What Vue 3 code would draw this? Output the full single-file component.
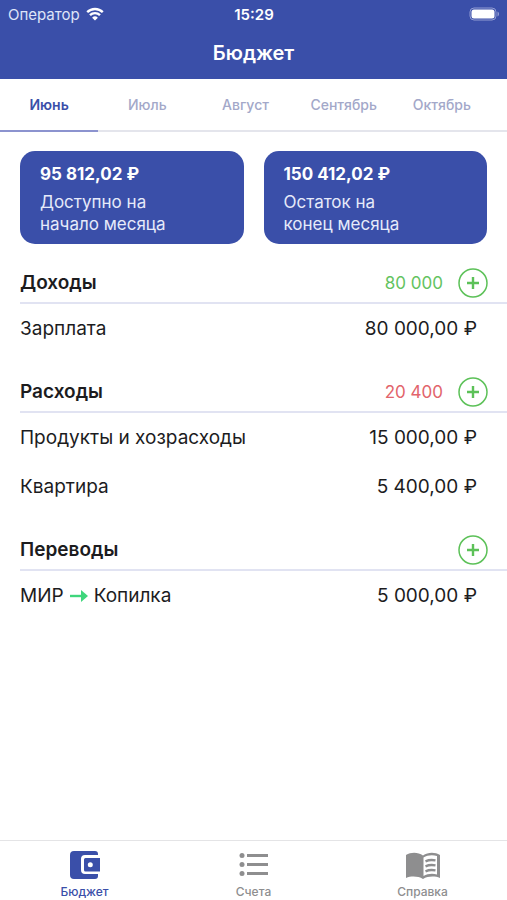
<template>
  <div class="app">
    <header class="header">
      <div class="status">
        <div class="carrier">
          <span>Оператор</span>
          <svg class="wifi" viewBox="0 0 18 14" aria-hidden="true">
            <path d="M1.2 5.1a11.2 11.2 0 0 1 15.6 0" />
            <path d="M4 8.1a7.2 7.2 0 0 1 10 0" />
            <path class="dot" d="M9 13.6 6.1 10.7a4.1 4.1 0 0 1 5.8 0z" />
          </svg>
        </div>
        <span class="time">15:29</span>
        <svg class="battery" viewBox="0 0 31 14" aria-hidden="true">
          <rect class="shell" x="1" y="1" width="26" height="12" rx="4" />
          <rect x="2.5" y="2.5" width="23" height="9" rx="2.5" />
          <path class="tip" d="M28.5 4.5c2 .8 2 4.2 0 5z" />
        </svg>
      </div>
      <h1>Бюджет</h1>
    </header>

    <nav class="months">
      <button
        v-for="month in months"
        :key="month"
        class="month"
        :class="{ active: month === currentMonth }"
        @click="currentMonth = month"
      >
        {{ month }}
      </button>
    </nav>

    <main class="content">
      <div class="cards">
        <div v-for="card in cards" :key="card.label" class="card">
          <strong>{{ card.amount }}</strong>
          <p>{{ card.label }}</p>
        </div>
      </div>

      <section v-for="group in groups" :key="group.title" class="group">
        <div class="group-head">
          <h2>{{ group.title }}</h2>
          <span class="total" :class="group.type">{{ group.total }}</span>
          <button class="add" :aria-label="'Добавить: ' + group.title">
            <svg viewBox="0 0 30 30" aria-hidden="true">
              <circle cx="15" cy="15" r="14" />
              <path d="M15 9v12M9 15h12" />
            </svg>
          </button>
        </div>
        <ul>
          <li v-for="item in group.items" :key="item.name">
            <span class="name">
              {{ item.name }}
              <template v-if="item.to">
                <svg class="arrow" viewBox="0 0 18 12" aria-hidden="true">
                  <path class="shaft" d="M0 6h13" />
                  <path d="M11 0l7 6-7 6z" />
                </svg>
                {{ item.to }}
              </template>
            </span>
            <span>{{ item.amount }}</span>
          </li>
        </ul>
      </section>
    </main>

    <nav class="bottom-nav">
      <a href="#budget" class="nav-item active">
        <svg viewBox="0 0 32 30" aria-hidden="true">
          <path
            d="M5 1h21a3 3 0 0 1 3 3v1H16a4 4 0 0 0-4 4v11a4 4 0 0 0 4 4h13v2a3 3 0 0 1-3 3H5a4 4 0 0 1-4-4V5a4 4 0 0 1 4-4z"
          />
          <path
            fill-rule="evenodd"
            d="M16.5 8H31v13.500H16.500A1.500 1.500 0 0 1 15 20V9.500A1.500 1.500 0 0 1 16.500 8zm4.800 4.300a2.500 2.500 0 1 0 0 5 2.500 2.500 0 0 0 0-5z"
          />
        </svg>
        <span>Бюджет</span>
      </a>
      <a href="#accounts" class="nav-item">
        <svg viewBox="0 0 32 30" aria-hidden="true">
          <circle cx="4" cy="5.5" r="2.5" />
          <circle cx="4" cy="14.5" r="2.5" />
          <circle cx="4" cy="23.5" r="2.5" />
          <path d="M9 4h21v3H9zM9 13h21v3H9zM9 22h21v3H9z" />
        </svg>
        <span>Счета</span>
      </a>
      <a href="#help" class="nav-item">
        <svg class="book" viewBox="0 0 36 30" aria-hidden="true">
          <path d="M1 5C6 2 13 2 18 5.500 23 2 30 2 35 5v23c-5-2-12-2-17 1-5-3-12-3-17-1z" />
          <path class="page" d="M18.500 7.500c4-2.500 9-3 13.500-1.500v18.500c-4.500-1.200-9.500-.8-13.500 1.500z" />
          <path
            class="lines"
            d="M20.500 11.300c3-1.300 6-1.600 10-.9M20.500 16.300c3-1.300 6-1.600 10-.9M20.500 21.300c3-1.300 6-1.600 10-.9"
          />
        </svg>
        <span>Справка</span>
      </a>
    </nav>
  </div>
</template>

<script setup>
import { ref } from 'vue';

const months = ['Июнь', 'Июль', 'Август', 'Сентябрь', 'Октябрь'];
const currentMonth = ref('Июнь');

const cards = [
  { amount: '95 812,02 ₽', label: 'Доступно на начало месяца' },
  { amount: '150 412,02 ₽', label: 'Остаток на конец месяца' },
];

const groups = [
  {
    title: 'Доходы',
    total: '80 000',
    type: 'income',
    items: [{ name: 'Зарплата', amount: '80 000,00 ₽' }],
  },
  {
    title: 'Расходы',
    total: '20 400',
    type: 'expense',
    items: [
      { name: 'Продукты и хозрасходы', amount: '15 000,00 ₽' },
      { name: 'Квартира', amount: '5 400,00 ₽' },
    ],
  },
  {
    title: 'Переводы',
    total: '',
    type: 'transfer',
    items: [{ name: 'МИР', to: 'Копилка', amount: '5 000,00 ₽' }],
  },
];
</script>

<style>
body {
  margin: 0;
  background: #fff;
}
</style>

<style scoped>
* {
  box-sizing: border-box;
}

.app {
  display: flex;
  flex-direction: column;
  min-height: 100vh;
  font-family: Inter, 'Liberation Sans', sans-serif;
  color: #1c1c1e;
}

h1,
h2,
p,
ul {
  margin: 0;
  padding: 0;
}

button {
  padding: 0;
  border: none;
  background: none;
  font-family: inherit;
  cursor: pointer;
}

/* Header */
.header {
  padding-bottom: 6px;
  background: #3a4fa9;
  color: #fff;
}

.status {
  display: grid;
  grid-template-columns: 1fr auto 1fr;
  align-items: center;
  height: 28px;
  padding: 0 7px 0 8px;
  font-size: 15px;
}

.carrier {
  display: flex;
  align-items: center;
  gap: 6px;
  color: #dfe4f8;
}

.wifi {
  width: 18px;
  height: 14px;
  fill: none;
  stroke: #fff;
  stroke-width: 2.4;
}

.wifi .dot {
  fill: #fff;
  stroke: none;
}

.time {
  font-weight: 600;
}

.battery {
  justify-self: end;
  width: 31px;
  height: 14px;
  fill: #fff;
}

.battery .shell {
  fill: none;
  stroke: #929dd3;
}

.battery .tip {
  fill: #929dd3;
}

h1 {
  padding-top: 5px;
  font-size: 20px;
  font-weight: 600;
  line-height: 40px;
  text-align: center;
}

/* Months */
.months {
  display: flex;
  height: 53px;
  padding-right: 16px;
  box-shadow: inset 0 -2px #e4e5ec;
}

.month {
  flex: 1 1 0;
  min-width: 0;
  border-bottom: 2px solid transparent;
  font-size: 14px;
  font-weight: 500;
  color: #a3a8c9;
}

.month.active {
  border-bottom-color: #8c93cf;
  font-weight: 600;
  color: #3a4fa9;
}

/* Balance cards */
.content {
  flex: 1;
  padding-top: 19px;
}

.cards {
  display: grid;
  grid-template-columns: 1fr 1fr;
  gap: 20px;
  padding: 0 20px;
}

.card {
  padding: 12px 20px 9px;
  border-radius: 15px;
  background: #3a4fa9;
  color: #fff;
  font-size: 17px;
  line-height: 22px;
}

.card strong {
  display: block;
  margin-bottom: 6px;
}

.card p {
  max-width: 144px;
  color: #e6eafa;
}

/* Groups */
.group {
  margin-top: 19px;
  padding-left: 20px;
}

.group-head {
  display: flex;
  align-items: center;
  height: 41px;
  padding-right: 19px;
  border-bottom: 2px solid #e1e3f2;
}

h2 {
  flex: 1;
  font-size: 19px;
  font-weight: 600;
}

.total {
  font-size: 17px;
}

.income {
  color: #64c35f;
}

.expense {
  color: #e2646b;
}

.add {
  margin-left: 15px;
}

.add svg {
  display: block;
  width: 30px;
  height: 30px;
  fill: none;
  stroke: #5cc158;
}

.add circle {
  stroke-width: 1.5;
}

.add path {
  stroke-width: 2.4;
}

li {
  display: flex;
  align-items: center;
  justify-content: space-between;
  height: 49px;
  padding-right: 30px;
  font-size: 19px;
}

.name {
  display: flex;
  align-items: center;
  gap: 6px;
}

.arrow {
  width: 18px;
  height: 12px;
  fill: #3fd67c;
}

.arrow .shaft {
  stroke: #3fd67c;
  stroke-width: 2.4;
}

/* Bottom navigation */
.bottom-nav {
  display: grid;
  grid-template-columns: repeat(3, 1fr);
  height: 60px;
  border-top: 1px solid #e4e4e6;
}

.nav-item {
  display: flex;
  flex-direction: column;
  align-items: center;
  padding-top: 9px;
  color: #8e8e8f;
  font-size: 12px;
  font-weight: 500;
  line-height: 16px;
  text-decoration: none;
}

.nav-item.active {
  color: #3a4fa9;
}

.nav-item svg {
  width: 32px;
  height: 30px;
  margin-bottom: 4px;
  fill: currentColor;
}

.nav-item .book {
  width: 36px;
}

.book .page {
  fill: #fff;
}

.book .lines {
  fill: none;
  stroke: currentColor;
  stroke-width: 2.4;
}
</style>
